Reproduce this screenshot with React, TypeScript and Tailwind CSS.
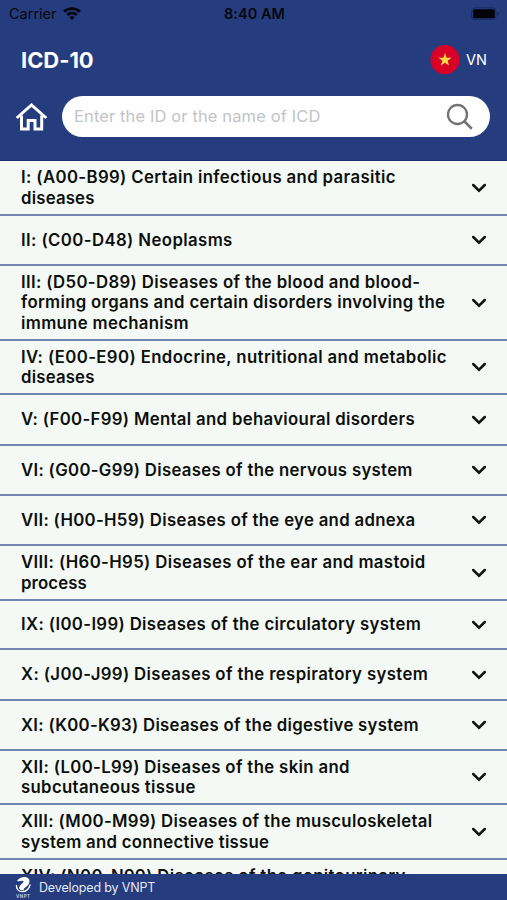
import React from "react";

type Chapter = { lines: { text: string; className: string }[]; height: string };

const CHAPTERS: Chapter[] = [
  { height: "h-[55px]", lines: [
    { text: "I: (A00-B99) Certain infectious and parasitic", className: "tracking-[0.37px]" },
    { text: "diseases", className: "tracking-[0.2px]" } ] },
  { height: "h-[50px]", lines: [{ text: "II: (C00-D48) Neoplasms", className: "tracking-[0.4px]" }] },
  { height: "h-[75px]", lines: [
    { text: "III: (D50-D89) Diseases of the blood and blood-", className: "tracking-[0.36px]" },
    { text: "forming organs and certain disorders involving the", className: "tracking-[0.32px]" },
    { text: "immune mechanism", className: "tracking-[0.33px]" } ] },
  { height: "h-[54px]", lines: [
    { text: "IV: (E00-E90) Endocrine, nutritional and metabolic", className: "tracking-[0.39px]" },
    { text: "diseases", className: "tracking-[0.2px]" } ] },
  { height: "h-[51px]", lines: [{ text: "V: (F00-F99) Mental and behavioural disorders", className: "tracking-[0.33px]" }] },
  { height: "h-[50px]", lines: [{ text: "VI: (G00-G99) Diseases of the nervous system", className: "tracking-[0.31px]" }] },
  { height: "h-[50px]", lines: [{ text: "VII: (H00-H59) Diseases of the eye and adnexa", className: "tracking-[0.32px]" }] },
  { height: "h-[55px]", lines: [
    { text: "VIII: (H60-H95) Diseases of the ear and mastoid", className: "tracking-[0.37px]" },
    { text: "process", className: "tracking-[0.13px]" } ] },
  { height: "h-[49px]", lines: [{ text: "IX: (I00-I99) Diseases of the circulatory system", className: "tracking-[0.35px]" }] },
  { height: "h-[51px]", lines: [{ text: "X: (J00-J99) Diseases of the respiratory system", className: "tracking-[0.37px]" }] },
  { height: "h-[50px]", lines: [{ text: "XI: (K00-K93) Diseases of the digestive system", className: "tracking-[0.29px]" }] },
  { height: "h-[54px]", lines: [
    { text: "XII: (L00-L99) Diseases of the skin and", className: "tracking-[0.35px]" },
    { text: "subcutaneous tissue", className: "tracking-[0.33px]" } ] },
  { height: "h-[55px]", lines: [
    { text: "XIII: (M00-M99) Diseases of the musculoskeletal", className: "tracking-[0.34px]" },
    { text: "system and connective tissue", className: "tracking-[0.27px]" } ] },
  { height: "h-[34px]", lines: [{ text: "XIV: (N00-N99) Diseases of the genitourinary", className: "tracking-[0.35px]" }] },
];

function StatusBar() {
  return (
    <div className="grid h-7 grid-cols-3 items-center pl-[9px] pr-[7px] text-[#05070d]">
      <div className="flex items-center gap-[6px]">
        <span className="text-[14.5px]">Carrier</span>
        <svg width="18" height="14" viewBox="0 0 18 14" fill="currentColor">
          <path d="M9 0.3C5.6 0.3 2.5 1.6 0.2 3.8L2 5.7C3.8 4 6.3 2.9 9 2.9s5.200 1.100 7 2.800l1.800-1.900C15.500 1.600 12.400 0.300 9 0.300Z" />
          <path d="M9 4.700c-2.200 0-4.200 0.900-5.700 2.300l1.900 1.900C6.200 8 7.500 7.400 9 7.400s2.800 0.600 3.800 1.500L14.700 7C13.200 5.600 11.200 4.700 9 4.700Z" />
          <path d="M9 9c-1 0-1.900 0.400-2.600 1L9 13l2.600-3C10.900 9.400 10 9 9 9Z" />
        </svg>
      </div>
      <span className="text-center text-[14.5px] font-semibold tracking-[0.05px]">8:40 AM</span>
      <svg className="justify-self-end" width="31" height="14" viewBox="0 0 31 14">
        <rect x="2.500" y="0.800" width="24.500" height="11.600" rx="3" fill="none" stroke="#172a63" strokeWidth="1" />
        <rect x="4" y="2.300" width="21.800" height="9" rx="1.500" fill="#020308" />
        <path d="M28.500 4.700v4c1-.3 1.500-1 1.500-2s-.5-1.700-1.500-2Z" fill="#172a63" />
      </svg>
    </div>
  );
}

function Header() {
  return (
    <header className="h-[161px] shrink-0 border-b border-[#1b2f6c] bg-[#253c7e]">
      <StatusBar />
      <div className="flex h-[64px] items-center justify-between pl-[21px] pr-5 text-white">
        <h1 className="text-[22px] font-bold tracking-[-0.05px]">ICD-10</h1>
        <div className="flex items-center gap-[6px]">
          <svg width="30" height="30" viewBox="0 0 30 30">
            <circle cx="15" cy="14.700" r="14.600" fill="#d80027" />
            <path d="M15 8l1.600 4.800h5l-4 3 1.500 4.800-4.100-2.900-4.100 2.900 1.500-4.800-4-3h5Z" fill="#ffda44" />
          </svg>
          <span className="text-[14.500px]">VN</span>
        </div>
      </div>
      <div className="mt-1 flex items-center pl-[15px] pr-[17px]">
        <svg width="33" height="30" viewBox="0 0 33 30" fill="none" stroke="#fff" strokeWidth="3">
          <path d="M1.700 16L16.500 2.900L31.300 16" />
          <path d="M6.500 13.500V27H13.200V18.500H20V27H26.700V13.500" />
        </svg>
        <div className="ml-[14px] flex h-[41px] flex-1 items-center justify-between rounded-full bg-white pl-3 pr-[16px]">
          <span className="text-[16.500px] tracking-[0.12px] text-[#c3c3c6]">Enter the ID or the name of ICD</span>
          <svg width="28" height="28" viewBox="0 0 28 28" fill="none" stroke="#727272" strokeWidth="2.300">
            <circle cx="11.500" cy="11.500" r="9.500" />
            <path d="M18.300 18.300L25.800 25.700" strokeWidth="2.600" />
          </svg>
        </div>
      </div>
    </header>
  );
}

function ChapterRow({ chapter }: { chapter: Chapter }) {
  return (
    <li className={`flex shrink-0 items-center justify-between border-b-2 border-[#7386b2] pl-[21px] pr-[20px] ${chapter.height}`}>
      <div className="text-[16.750px] font-semibold leading-[20.500px] text-[#0c0f0c]">
        {chapter.lines.map((line) => (
          <div key={line.text} className={`whitespace-nowrap ${line.className}`}>{line.text}</div>
        ))}
      </div>
      {chapter.height !== "h-[34px]" && (
        <svg className="shrink-0" width="16" height="10" viewBox="0 0 16 10" fill="none" stroke="#101310" strokeWidth="2.500" strokeLinecap="round">
          <path d="M2.200 2L8 7.700L13.800 2" />
        </svg>
      )}
    </li>
  );
}

function Footer() {
  return (
    <footer className="flex h-[26px] shrink-0 items-center bg-[#253c7e] pl-[14px] text-white">
      <svg width="18" height="24" viewBox="0 0 18 24">
        <path d="M3 6C5 2.600 9.500 1.200 13 2.400C16.800 4 16 8.500 12.500 11.500C10 13.500 9 14.300 10 15.500C5.500 15.700 3.800 12.800 6.300 10.300C8.500 8.200 10.300 6.600 9.300 6C8 5.100 5.300 6.700 3 6Z" fill="#fff" />
        <path d="M2.500 10C2 14 4.500 16.800 8.500 16.700C12.300 16.600 15 14 16.300 9.500" fill="none" stroke="#fff" strokeWidth="1.300" />
        <text x="9" y="22.500" textAnchor="middle" fontSize="4.500" fontWeight="600" fill="#d3daee" textLength="14">VNPT</text>
      </svg>
      <span className="ml-[7px] pt-px text-[12.500px] leading-4 tracking-[-0.150px] text-[#e3e8f4]">Developed by VNPT</span>
    </footer>
  );
}

export default function App() {
  return (
    <div className="flex h-[900px] w-[507px] flex-col overflow-hidden bg-[#f4f9f5] font-['Inter','Liberation_Sans',sans-serif]">
      <Header />
      <ul className="flex min-h-0 flex-1 flex-col overflow-hidden">
        {CHAPTERS.map((chapter) => (
          <ChapterRow key={chapter.lines[0].text} chapter={chapter} />
        ))}
      </ul>
      <Footer />
    </div>
  );
}
